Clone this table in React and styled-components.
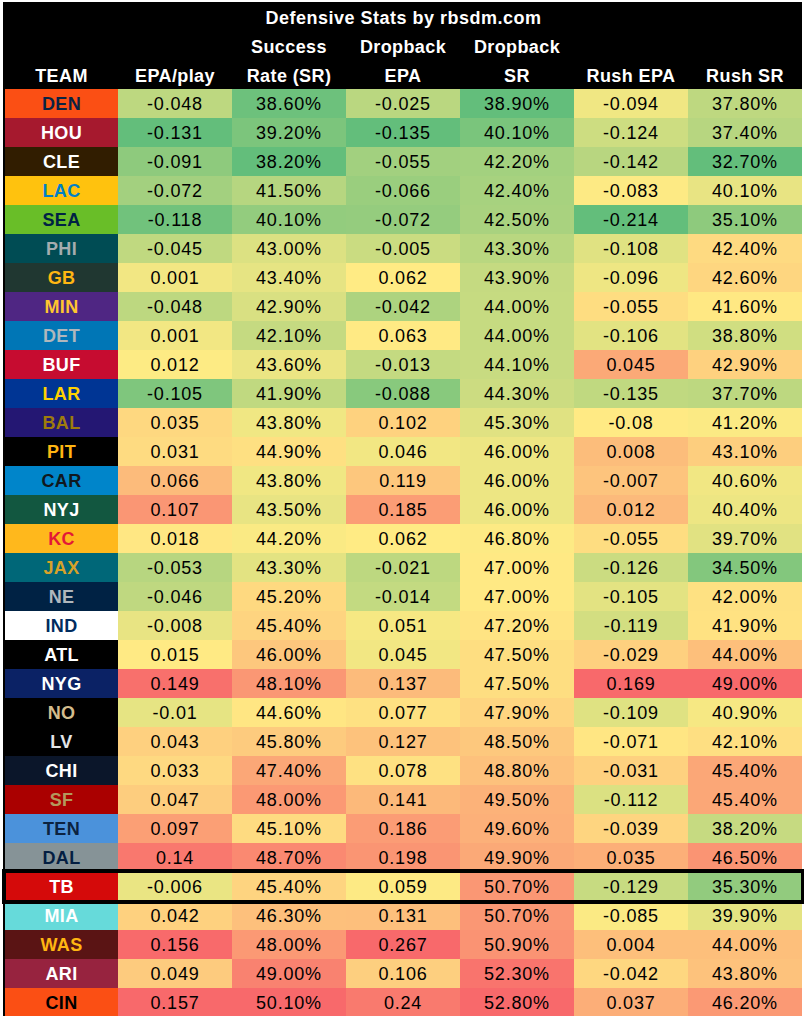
import React from "react";
import styled, { createGlobalStyle } from "styled-components";

const GlobalStyle = createGlobalStyle`
  body {
    margin: 0;
    background: #ffffff;
    font-family: "Liberation Sans", Arial, sans-serif;
  }
`;

const COLUMNS = "113px repeat(6, 114px)";

const Wrapper = styled.div`
  padding: 2px 0 0 3px;
`;

const Table = styled.div`
  border-left: 2px solid #000;
  display: flex;
  flex-direction: column;
  width: 797px;
`;

const HeaderRow = styled.div`
  background: #000;
  color: #fff;
  display: grid;
  grid-template-columns: ${COLUMNS};
  height: 29px;
`;

const Title = styled.div`
  align-items: center;
  display: flex;
  font-size: 18px;
  font-weight: 700;
  grid-column: 1 / -1;
  justify-content: center;
  letter-spacing: 0.5px;
  padding-top: 3px;
`;

const HeaderCell = styled.div`
  align-items: center;
  display: flex;
  font-size: 18px;
  font-weight: 700;
  justify-content: center;
  letter-spacing: 0.4px;
  padding-top: 3px;
  white-space: nowrap;
`;

const Row = styled.div`
  display: grid;
  grid-template-columns: ${COLUMNS};
  height: 29px;
  position: relative;
  ${({ $highlight }) =>
    $highlight &&
    `
    outline: 4px solid #000;
    outline-offset: -1px;
    z-index: 1;
  `}
`;

const TeamCell = styled.div`
  align-items: center;
  background: ${({ $bg }) => $bg};
  color: ${({ $fg }) => $fg};
  display: flex;
  font-size: 18px;
  font-weight: 700;
  justify-content: center;
  letter-spacing: 0.3px;
  padding-top: 2px;
`;

const StatCell = styled.div`
  align-items: center;
  color: #000;
  display: flex;
  font-size: 18px;
  justify-content: center;
  letter-spacing: 0.8px;
  padding-top: 2px;
`;

const teams = [
  ["DEN", "#FB4F14", "#0A2343", "-0.048", "38.60%", "-0.025", "38.90%", "-0.094", "37.80%"],
  ["HOU", "#A6192E", "#FFFFFF", "-0.131", "39.20%", "-0.135", "40.10%", "-0.124", "37.40%"],
  ["CLE", "#311D00", "#FFFFFF", "-0.091", "38.20%", "-0.055", "42.20%", "-0.142", "32.70%"],
  ["LAC", "#FFC20E", "#0080C6", "-0.072", "41.50%", "-0.066", "42.40%", "-0.083", "40.10%"],
  ["SEA", "#69BE28", "#002244", "-0.118", "40.10%", "-0.072", "42.50%", "-0.214", "35.10%"],
  ["PHI", "#004C54", "#A5ACAF", "-0.045", "43.00%", "-0.005", "43.30%", "-0.108", "42.40%"],
  ["GB", "#203731", "#FFB612", "0.001", "43.40%", "0.062", "43.90%", "-0.096", "42.60%"],
  ["MIN", "#4F2683", "#FFC62F", "-0.048", "42.90%", "-0.042", "44.00%", "-0.055", "41.60%"],
  ["DET", "#0076B6", "#B0B7BC", "0.001", "42.10%", "0.063", "44.00%", "-0.106", "38.80%"],
  ["BUF", "#C60C30", "#FFFFFF", "0.012", "43.60%", "-0.013", "44.10%", "0.045", "42.90%"],
  ["LAR", "#003594", "#FFD100", "-0.105", "41.90%", "-0.088", "44.30%", "-0.135", "37.70%"],
  ["BAL", "#241773", "#9E7C0C", "0.035", "43.80%", "0.102", "45.30%", "-0.08", "41.20%"],
  ["PIT", "#000000", "#FFB612", "0.031", "44.90%", "0.046", "46.00%", "0.008", "43.10%"],
  ["CAR", "#0085CA", "#101820", "0.066", "43.80%", "0.119", "46.00%", "-0.007", "40.60%"],
  ["NYJ", "#125740", "#FFFFFF", "0.107", "43.50%", "0.185", "46.00%", "0.012", "40.40%"],
  ["KC", "#FFB81C", "#E31837", "0.018", "44.20%", "0.062", "46.80%", "-0.055", "39.70%"],
  ["JAX", "#006778", "#D7A22A", "-0.053", "43.30%", "-0.021", "47.00%", "-0.126", "34.50%"],
  ["NE", "#002244", "#B0B7BC", "-0.046", "45.20%", "-0.014", "47.00%", "-0.105", "42.00%"],
  ["IND", "#FFFFFF", "#002C5F", "-0.008", "45.40%", "0.051", "47.20%", "-0.119", "41.90%"],
  ["ATL", "#000000", "#FFFFFF", "0.015", "46.00%", "0.045", "47.50%", "-0.029", "44.00%"],
  ["NYG", "#0B2265", "#FFFFFF", "0.149", "48.10%", "0.137", "47.50%", "0.169", "49.00%"],
  ["NO", "#000000", "#D3BC8D", "-0.01", "44.60%", "0.077", "47.90%", "-0.109", "40.90%"],
  ["LV", "#000000", "#E2E4E6", "0.043", "45.80%", "0.127", "48.50%", "-0.071", "42.10%"],
  ["CHI", "#0B162A", "#FFFFFF", "0.033", "47.40%", "0.078", "48.80%", "-0.031", "45.40%"],
  ["SF", "#AA0000", "#B3995D", "0.047", "48.00%", "0.141", "49.50%", "-0.112", "45.40%"],
  ["TEN", "#4B92DB", "#0C2340", "0.097", "45.10%", "0.186", "49.60%", "-0.039", "38.20%"],
  ["DAL", "#869397", "#041E42", "0.14", "48.70%", "0.198", "49.90%", "0.035", "46.50%"],
  ["TB", "#D50A0A", "#FFFFFF", "-0.006", "45.40%", "0.059", "50.70%", "-0.129", "35.30%"],
  ["MIA", "#66DADA", "#FFFFFF", "0.042", "46.30%", "0.131", "50.70%", "-0.085", "39.90%"],
  ["WAS", "#5A1414", "#FFB612", "0.156", "48.00%", "0.267", "50.90%", "0.004", "44.00%"],
  ["ARI", "#97233F", "#FFFFFF", "0.049", "49.00%", "0.106", "52.30%", "-0.042", "43.80%"],
  ["CIN", "#FB4F14", "#000000", "0.157", "50.10%", "0.24", "52.80%", "0.037", "46.20%"]
];

const GREEN = [99, 190, 123];
const YELLOW = [255, 235, 132];
const RED = [248, 105, 107];

const mix = (a, b, t) =>
  `rgb(${a.map((v, i) => Math.round(v + (b[i] - v) * t)).join(",")})`;

// green-yellow-red scale: low is good for a defense
const scaleFor = values => {
  const sorted = [...values].sort((a, b) => a - b);
  const n = sorted.length;
  const mid = (sorted[n / 2 - 1] + sorted[n / 2]) / 2;
  const min = sorted[0];
  const max = sorted[n - 1];
  return v =>
    v <= mid
      ? mix(GREEN, YELLOW, (v - min) / (mid - min))
      : mix(YELLOW, RED, (v - mid) / (max - mid));
};

const scales = [3, 4, 5, 6, 7, 8].map(col =>
  scaleFor(teams.map(row => parseFloat(row[col])))
);

const App = () => (
  <Wrapper>
    <GlobalStyle />
    <Table>
      <HeaderRow>
        <Title>Defensive Stats by rbsdm.com</Title>
      </HeaderRow>
      <HeaderRow>
        <HeaderCell />
        <HeaderCell />
        <HeaderCell>Success</HeaderCell>
        <HeaderCell>Dropback</HeaderCell>
        <HeaderCell>Dropback</HeaderCell>
        <HeaderCell />
        <HeaderCell />
      </HeaderRow>
      <HeaderRow>
        <HeaderCell>TEAM</HeaderCell>
        <HeaderCell>EPA/play</HeaderCell>
        <HeaderCell>Rate (SR)</HeaderCell>
        <HeaderCell>EPA</HeaderCell>
        <HeaderCell>SR</HeaderCell>
        <HeaderCell>Rush EPA</HeaderCell>
        <HeaderCell>Rush SR</HeaderCell>
      </HeaderRow>
      {teams.map(([team, bg, fg, ...stats]) => (
        <Row key={team} $highlight={team === "TB"}>
          <TeamCell $bg={bg} $fg={fg}>
            {team}
          </TeamCell>
          {stats.map((value, i) => (
            <StatCell
              key={i}
              style={{ background: scales[i](parseFloat(value)) }}
            >
              {value}
            </StatCell>
          ))}
        </Row>
      ))}
    </Table>
  </Wrapper>
);

export default App;
